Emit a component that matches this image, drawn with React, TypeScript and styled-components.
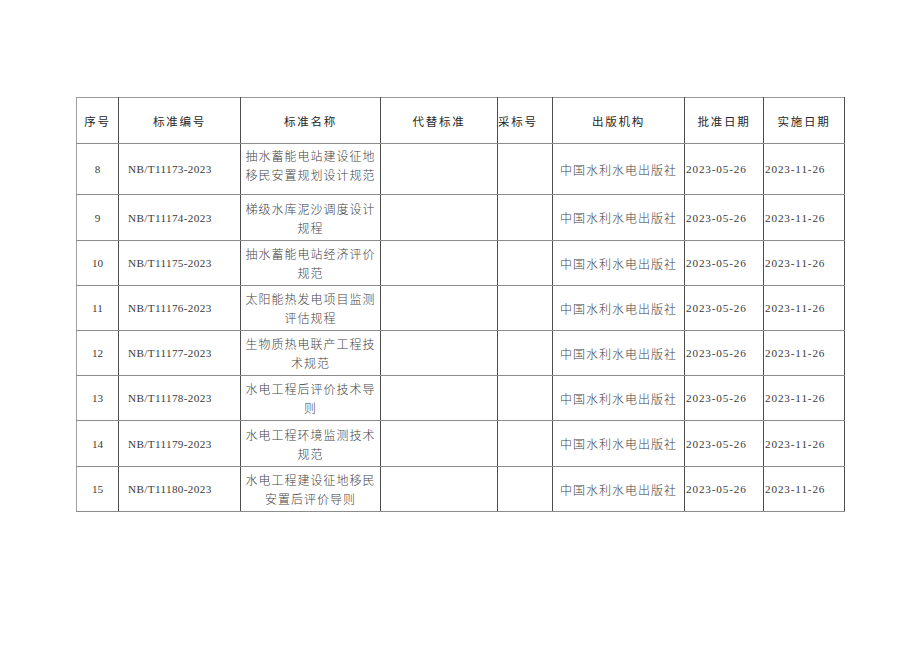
import { createGlobalStyle, styled } from 'styled-components';

const GlobalStyle = createGlobalStyle`
  html, body {
    margin: 0;
    padding: 0;
    background: #ffffff;
  }
`;

const Page = styled.div`
  width: 920px;
  height: 651px;
  box-sizing: border-box;
  padding: 97px 0 0 76px;
  background: #ffffff;
`;

const Table = styled.table`
  border-collapse: collapse;
  table-layout: fixed;
  width: 769px;
  font-family: 'Noto Sans CJK SC', 'Noto Sans', sans-serif;
  color: #444444;
`;

const HeadCell = styled.th<{ $align?: 'left' | 'center' }>`
  height: 45px;
  padding: 0;
  font-size: 11.5px;
  font-weight: 400;
  letter-spacing: 1.8px;
  color: #262626;
  text-align: ${p => p.$align ?? 'center'};
  vertical-align: middle;
  border-top: 1px solid #9a9a9a;
  border-bottom: 1px solid #8c8c8c;
  border-left: 1px solid #4e4e4e;
  border-right: 1px solid #4e4e4e;
  white-space: nowrap;

  &:first-child {
    border-left-color: #a0a0a0;
  }
`;

const Row = styled.tr<{ $h: number }>`
  height: ${p => p.$h}px;
`;

const Cell = styled.td<{ $align?: 'left' | 'center'; $latin?: boolean; $top?: boolean }>`
  padding: ${p => (p.$top ? '2px 3px 0' : '0 3px')};
  font-size: ${p => (p.$latin ? '11.2px' : '12px')};
  font-family: ${p =>
    p.$latin ? "'Liberation Serif', 'DejaVu Serif', serif" : "'Noto Sans CJK SC', sans-serif"};
  font-weight: ${p => (p.$latin ? 400 : 300)};
  letter-spacing: ${p => (p.$latin ? '0' : '1px')};
  line-height: ${p => (p.$latin ? '14px' : '19px')};
  color: ${p => (p.$latin ? '#3a3a3a' : '#444444')};
  text-align: ${p => p.$align ?? 'center'};
  vertical-align: ${p => (p.$top ? 'top' : 'middle')};
  border-top: 1px solid #8c8c8c;
  border-bottom: 1px solid #8c8c8c;
  border-left: 1px solid #4e4e4e;
  border-right: 1px solid #4e4e4e;
  overflow: hidden;
  white-space: ${p => (p.$latin ? 'nowrap' : 'normal')};

  &:first-child {
    border-left-color: #a0a0a0;
  }
`;

const CodeCell = styled(Cell)`
  padding-left: 9px;
  letter-spacing: 0.35px;
`;

const DateCell = styled(Cell)`
  padding: 0 0 0 1px;
  letter-spacing: 0.85px;
`;

type Standard = {
  no: number;
  code: string;
  name: string;
  height: number;
};

const rows: Standard[] = [
  { no: 8, code: 'NB/T11173-2023', name: '抽水蓄能电站建设征地移民安置规划设计规范', height: 51 },
  { no: 9, code: 'NB/T11174-2023', name: '梯级水库泥沙调度设计规程', height: 46 },
  { no: 10, code: 'NB/T11175-2023', name: '抽水蓄能电站经济评价规范', height: 45 },
  { no: 11, code: 'NB/T11176-2023', name: '太阳能热发电项目监测评估规程', height: 45 },
  { no: 12, code: 'NB/T11177-2023', name: '生物质热电联产工程技术规范', height: 45 },
  { no: 13, code: 'NB/T11178-2023', name: '水电工程后评价技术导则', height: 45 },
  { no: 14, code: 'NB/T11179-2023', name: '水电工程环境监测技术规范', height: 46 },
  { no: 15, code: 'NB/T11180-2023', name: '水电工程建设征地移民安置后评价导则', height: 45 },
];

const widths = [42, 122, 140, 117, 55, 132, 79, 81];

export default function App() {
  return (
    <>
      <GlobalStyle />
      <Page>
        <Table>
          <colgroup>
            {widths.map((w, i) => (
              <col key={i} style={{ width: w }} />
            ))}
          </colgroup>
          <thead>
            <tr>
              <HeadCell>序号</HeadCell>
              <HeadCell>标准编号</HeadCell>
              <HeadCell>标准名称</HeadCell>
              <HeadCell>代替标准</HeadCell>
              <HeadCell $align="left">采标号</HeadCell>
              <HeadCell>出版机构</HeadCell>
              <HeadCell>批准日期</HeadCell>
              <HeadCell>实施日期</HeadCell>
            </tr>
          </thead>
          <tbody>
            {rows.map(r => (
              <Row key={r.no} $h={r.height}>
                <Cell $latin>{r.no}</Cell>
                <CodeCell $latin $align="left">
                  {r.code}
                </CodeCell>
                <Cell $top={r.no === 8}>{r.name}</Cell>
                <Cell />
                <Cell />
                <Cell>中国水利水电出版社</Cell>
                <DateCell $latin $align="left">
                  2023-05-26
                </DateCell>
                <DateCell $latin $align="left">
                  2023-11-26
                </DateCell>
              </Row>
            ))}
          </tbody>
        </Table>
      </Page>
    </>
  );
}
